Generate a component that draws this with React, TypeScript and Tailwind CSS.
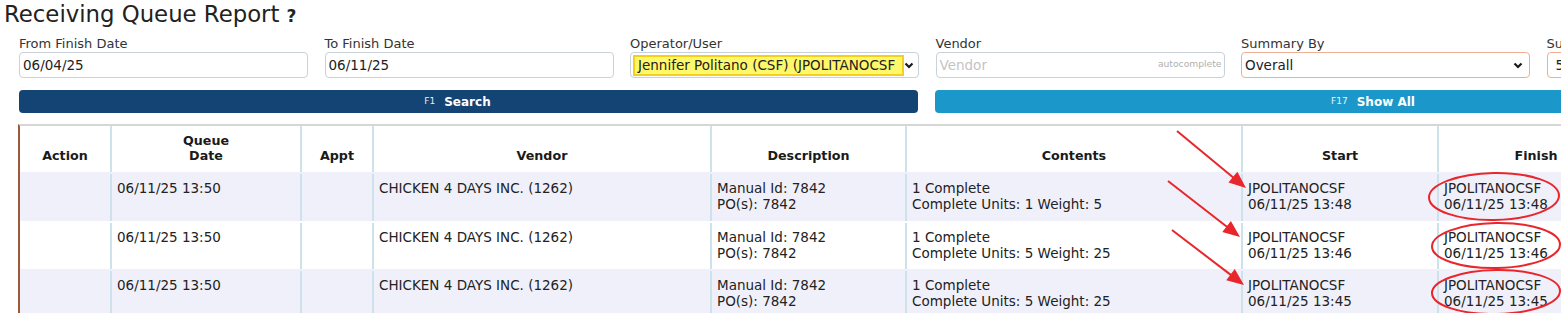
import React from "react";

const COLS = "grid grid-cols-[90px_190px_72px_338px_195px_336px_196px_196px_200px]";

function Chevron() {
  return (
    <svg width="10" height="7" viewBox="0 0 10 7">
      <path d="M1.5 1.5 L5 5 L8.5 1.5" fill="none" stroke="#1a1a1a" strokeWidth="2.2" />
    </svg>
  );
}

function Arrow({ x1, y1, x2, y2 }: { x1: number; y1: number; x2: number; y2: number }) {
  const dx = x2 - x1;
  const dy = y2 - y1;
  const L = Math.hypot(dx, dy);
  const ux = dx / L;
  const uy = dy / L;
  const hl = 17;
  const hw = 7;
  const bx = x2 - ux * hl;
  const by = y2 - uy * hl;
  const px = -uy * hw;
  const py = ux * hw;
  return (
    <g>
      <line x1={x1} y1={y1} x2={bx + ux * 2} y2={by + uy * 2} stroke="#e8262b" strokeWidth="2" />
      <polygon points={`${x2},${y2} ${bx + px},${by + py} ${bx - px},${by - py}`} fill="#e8262b" />
    </g>
  );
}

const rows = [
  { units: "1", weight: "5", time: "13:48" },
  { units: "5", weight: "25", time: "13:46" },
  { units: "5", weight: "25", time: "13:45" },
];

function Label({ children }: { children: React.ReactNode }) {
  return <div className="text-[13px] leading-[15px] text-[#333] h-[16px] whitespace-nowrap">{children}</div>;
}

export default function App() {
  const headCell = "flex items-end justify-center text-center pb-[9px] font-bold text-[12.7px] leading-[15px] text-[#1a1a1a]";
  const bodyCell = "px-[5px] pt-[6px] text-[13.5px] leading-[16px] text-[#222] whitespace-nowrap overflow-hidden";
  return (
    <div className="relative w-[1561px] h-[313px] overflow-hidden bg-white font-['DejaVu_Sans',sans-serif]">
      {/* Title */}
      <div className="h-[36px] pl-[4px] pt-[1px] flex items-start whitespace-nowrap">
        <span className="text-[22.8px] leading-[26px] text-[#222]">Receiving Queue Report</span>
        <span className="ml-[7px] mt-[5px] text-[17px] leading-[20px] font-bold text-[#222]">?</span>
      </div>

      {/* Filters */}
      <div className="pl-[19px] flex gap-[16.5px] w-[2000px]">
        <div className="w-[289px] shrink-0">
          <Label>From Finish Date</Label>
          <div className="h-[26px] border border-[#c9d1d9] rounded-[4px] px-[3px] flex items-center text-[13.5px] text-[#222]">06/04/25</div>
        </div>
        <div className="w-[289px] shrink-0">
          <Label>To Finish Date</Label>
          <div className="h-[26px] border border-[#c9d1d9] rounded-[4px] px-[3px] flex items-center text-[13.5px] text-[#222]">06/11/25</div>
        </div>
        <div className="w-[289px] shrink-0">
          <Label>Operator/User</Label>
          <div className="h-[26px] border border-[#c9d1d9] rounded-[4px] pl-[2px] pr-[4px] flex items-center justify-between">
            <div className="h-[21px] w-[272px] bg-[#fff86a] border-2 border-[#f5cf1d] flex items-center pl-[3px] text-[13.5px] text-[#222] whitespace-nowrap overflow-hidden">
              Jennifer Politano (CSF) (JPOLITANOCSF
            </div>
            <Chevron />
          </div>
        </div>
        <div className="w-[289px] shrink-0">
          <Label>Vendor</Label>
          <div className="relative h-[26px] border border-[#c9d1d9] rounded-[4px] px-[3px] flex items-center text-[13.5px] text-[#c4c4c4]">
            Vendor
            <span className="absolute right-[2px] top-[5px] text-[9.2px] leading-[11px] text-[#b0b0b0]">autocomplete</span>
          </div>
        </div>
        <div className="w-[289px] shrink-0">
          <Label>Summary By</Label>
          <div className="h-[26px] border border-[#f0ae93] rounded-[4px] pl-[3px] pr-[6px] flex items-center justify-between text-[13.5px] text-[#222]">
            Overall
            <Chevron />
          </div>
        </div>
        <div className="w-[289px] shrink-0">
          <Label>Summary</Label>
          <div className="h-[26px] border border-[#f0ae93] rounded-[4px] pl-[8px] pr-[3px] flex items-center text-[13.5px] text-[#222]">5</div>
        </div>
      </div>

      {/* Buttons */}
      <div className="pl-[19px] mt-[12px] flex gap-[16.5px] w-[2000px]">
        <div className="w-[899px] h-[23px] rounded-[4px] bg-[#144473] flex items-center justify-center pr-[22px] text-white">
          <span className="text-[9px] mr-[9px] opacity-90">F1</span>
          <span className="text-[12px] font-bold">Search</span>
        </div>
        <div className="w-[899px] h-[23px] rounded-[4px] bg-[#1b98c9] flex items-center justify-center pr-[22px] text-white">
          <span className="text-[9px] mr-[9px] opacity-90">F17</span>
          <span className="text-[12px] font-bold">Show All</span>
        </div>
      </div>

      {/* Table */}
      <div className="mt-[11px] ml-[18px] w-[2000px] border-t-2 border-t-[#d6d6d6] border-l-2 border-l-[#9b5a3a]">
        <div className={`${COLS} h-[46px] bg-white`}>
          <div className={headCell}>Action</div>
          <div className={`${headCell} border-l-2 border-[#cde2eb]`}>Queue<br />Date</div>
          <div className={`${headCell} border-l-2 border-[#cde2eb]`}>Appt</div>
          <div className={`${headCell} border-l-2 border-[#cde2eb]`}>Vendor</div>
          <div className={`${headCell} border-l-2 border-[#cde2eb]`}>Description</div>
          <div className={`${headCell} border-l-2 border-[#cde2eb]`}>Contents</div>
          <div className={`${headCell} border-l-2 border-[#cde2eb]`}>Start</div>
          <div className={`${headCell} border-l-2 border-[#cde2eb]`}>Finish</div>
          <div className={`${headCell} border-l-2 border-[#cde2eb]`}></div>
        </div>
        {rows.map((r, i) => (
          <div key={i} className={`${COLS} pt-[2px] ${i === 1 ? "h-[48px] bg-white" : "h-[49px] bg-[#f0f0fa]"}`}>
            <div className={bodyCell}></div>
            <div className={`${bodyCell} border-l-2 border-[#cde2eb]`}>06/11/25 13:50</div>
            <div className={`${bodyCell} border-l-2 border-[#cde2eb]`}></div>
            <div className={`${bodyCell} border-l-2 border-[#cde2eb]`}>CHICKEN 4 DAYS INC. (1262)</div>
            <div className={`${bodyCell} border-l-2 border-[#cde2eb]`}>
              Manual Id: 7842
              <br />
              PO(s): 7842
            </div>
            <div className={`${bodyCell} border-l-2 border-[#cde2eb]`}>
              1 Complete
              <br />
              Complete Units: {r.units} Weight: {r.weight}
            </div>
            <div className={`${bodyCell} border-l-2 border-[#cde2eb]`}>
              JPOLITANOCSF
              <br />
              06/11/25 {r.time}
            </div>
            <div className={`${bodyCell} border-l-2 border-[#cde2eb]`}>
              JPOLITANOCSF
              <br />
              06/11/25 {r.time}
            </div>
            <div className={`${bodyCell} border-l-2 border-[#cde2eb]`}></div>
          </div>
        ))}
      </div>

      {/* Annotations */}
      <svg className="absolute inset-0 pointer-events-none" width="1561" height="313" viewBox="0 0 1561 313">
        <Arrow x1={1177} y1={131} x2={1246} y2={188} />
        <Arrow x1={1168} y1={181} x2={1240} y2={237} />
        <Arrow x1={1172} y1={230} x2={1244} y2={285} />
        <g fill="none" stroke="#e8262b" strokeWidth="2">
          <ellipse cx={1494} cy={196.5} rx={65} ry={23.5} transform="rotate(-1 1494 196.5)" />
          <ellipse cx={1496} cy={245.5} rx={64} ry={22.5} transform="rotate(-1 1496 245.5)" />
          <ellipse cx={1496} cy={292} rx={64} ry={22} transform="rotate(-1 1496 292)" />
        </g>
      </svg>
    </div>
  );
}
